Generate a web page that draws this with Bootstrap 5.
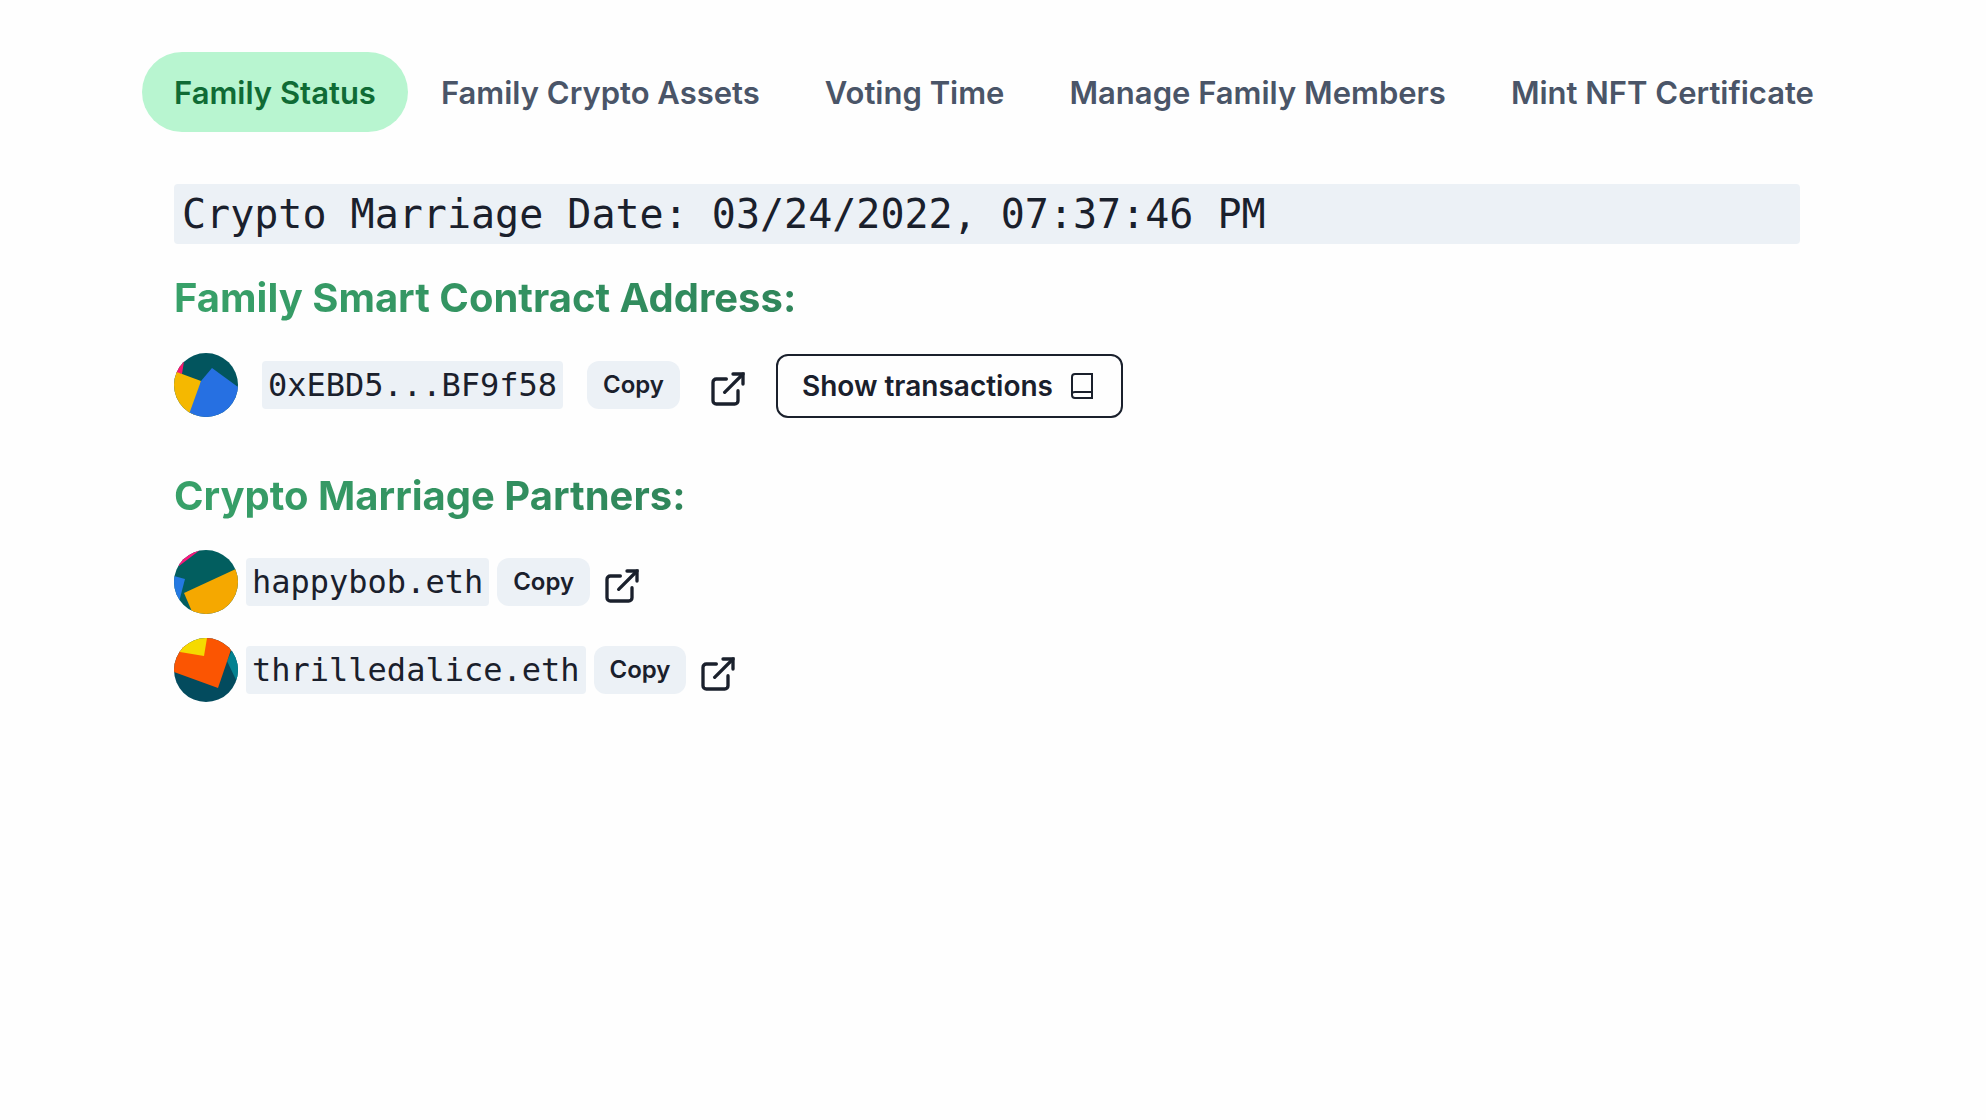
<!DOCTYPE html>
<html lang="en">
<head>
<meta charset="utf-8">
<meta name="viewport" content="width=device-width, initial-scale=1">
<title>Family Status</title>
<link href="https://cdn.jsdelivr.net/npm/bootstrap@5.3.0/dist/css/bootstrap.min.css" rel="stylesheet">
<style>
body { font-family: Inter, sans-serif; color: #1a202c; background: #fefefe; }
.page-shell { padding: 52px 142px; }
.family-tabs { gap: 1px; }
.family-tabs .nav-link { font-size: 31px; line-height: 48px; font-weight: 600; padding: 17px 32px 15px; border-radius: 40px; color: #4a5568; white-space: nowrap; }
.family-tabs .nav-link.active { background: #b8f5d0; color: #0f6b35; }
.status-panel { padding: 52px 44px 0 32px; }
.code-text { font-family: "DejaVu Sans Mono", monospace; background: #ecf1f6; color: #1a202c; font-size: 32px; line-height: 48px; padding: 0 6px; border-radius: 4px; }
.code-date { display: block; font-size: 40px; line-height: 60px; padding: 0 8px; }
.green-title { font-size: 40px; line-height: 60px; font-weight: 700; width: fit-content; margin: 24px 0; color: transparent; background: linear-gradient(to right, #38a169, #2f855a); -webkit-background-clip: text; background-clip: text; }
.avatar-pic { width: 64px; height: 64px; flex: none; }
.gap-wide { gap: 24px; }
.copy-btn { font-size: 24px; line-height: 48px; font-weight: 600; padding: 0 16px; border: 0; border-radius: 12px; background: #ecf1f6; color: #1a202c; }
.copy-btn:hover { background: #e2e8f0; }
.ext-link { color: #1a202c; line-height: 0; margin: 8px 4px 0; }
.ext-link svg { width: 40px; height: 40px; }
.show-btn { font-size: 28px; line-height: 60px; font-weight: 600; padding: 0 24px; border: 2px solid #1a202c; border-radius: 12px; color: #1a202c; gap: 16px; margin-top: 2px; }
.show-btn svg { width: 28px; height: 28px; }
</style>
<script src="https://cdn.jsdelivr.net/npm/bootstrap@5.3.0/dist/js/bootstrap.bundle.min.js"></script>
</head>
<body>
<svg class="d-none" aria-hidden="true">
  <symbol id="ext" viewBox="0 0 24 24"><g fill="none" stroke="currentColor" stroke-linecap="round" stroke-width="2"><path d="M18 13v6a2 2 0 0 1-2 2H5a2 2 0 0 1-2-2V8a2 2 0 0 1 2-2h6"/><path d="M15 3h6v6"/><path d="M10 14L21 3"/></g></symbol>
</svg>
<main class="page-shell">
  <nav class="nav nav-pills flex-nowrap family-tabs">
    <a class="nav-link active" aria-current="page" href="#status">Family Status</a>
    <a class="nav-link" href="#assets">Family Crypto Assets</a>
    <a class="nav-link" href="#voting">Voting Time</a>
    <a class="nav-link" href="#members">Manage Family Members</a>
    <a class="nav-link" href="#mint">Mint NFT Certificate</a>
  </nav>
  <section class="status-panel" id="status">
    <code class="code-text code-date">Crypto Marriage Date: 03/24/2022, 07:37:46 PM</code>

    <h2 class="green-title">Family Smart Contract Address:</h2>
    <div class="d-flex align-items-center gap-wide">
      <svg class="avatar-pic rounded-circle" viewBox="0 0 64 64" aria-hidden="true"><rect width="64" height="64" fill="#02555e"/><path d="M0 0H10V8L8 21L0 19Z" fill="#f9186f"/><path d="M0 18L27 28L22 64H0Z" fill="#f5b800"/><path d="M38 15L64 34V64H14L27 28Z" fill="#2670e2"/></svg>
      <code class="code-text">0xEBD5...BF9f58</code>
      <button class="btn copy-btn" type="button">Copy</button>
      <a class="ext-link" href="#contract" aria-label="Open contract"><svg><use href="#ext"/></svg></a>
      <button class="btn show-btn d-flex align-items-center" type="button">Show transactions
        <svg viewBox="0 0 28 28" fill="none" stroke="currentColor" stroke-width="2" aria-hidden="true"><path d="M23 2H6Q3 2 3 5V23Q3 26 6 26H23ZM3 22Q3 20 6 20H23"/></svg>
      </button>
    </div>

    <h2 class="green-title mt-5">Crypto Marriage Partners:</h2>
    <div class="d-flex flex-column gap-4">
      <div class="d-flex align-items-center gap-2">
        <svg class="avatar-pic rounded-circle" viewBox="0 0 64 64" aria-hidden="true"><rect width="64" height="64" fill="#025e5f"/><path d="M0 0H26L5 16Z" fill="#f9187c"/><path d="M0 26L11 29L5 52H0Z" fill="#2479e2"/><path d="M64 18V64H19L10 43Z" fill="#f5a800"/></svg>
        <code class="code-text">happybob.eth</code>
        <button class="btn copy-btn" type="button">Copy</button>
        <a class="ext-link" href="#happybob" aria-label="Open happybob.eth"><svg><use href="#ext"/></svg></a>
      </div>
      <div class="d-flex align-items-center gap-2">
        <svg class="avatar-pic rounded-circle" viewBox="0 0 64 64" aria-hidden="true"><rect width="64" height="64" fill="#034b5e"/><path d="M59 10L64 12V46L53 23Z" fill="#028291"/><path d="M0 10L33 0H61L44 50L0 34Z" fill="#fb5502"/><path d="M0 0H33L30 18L0 13Z" fill="#f5da00"/></svg>
        <code class="code-text">thrilledalice.eth</code>
        <button class="btn copy-btn" type="button">Copy</button>
        <a class="ext-link" href="#thrilledalice" aria-label="Open thrilledalice.eth"><svg><use href="#ext"/></svg></a>
      </div>
    </div>
  </section>
</main>
</body>
</html>
